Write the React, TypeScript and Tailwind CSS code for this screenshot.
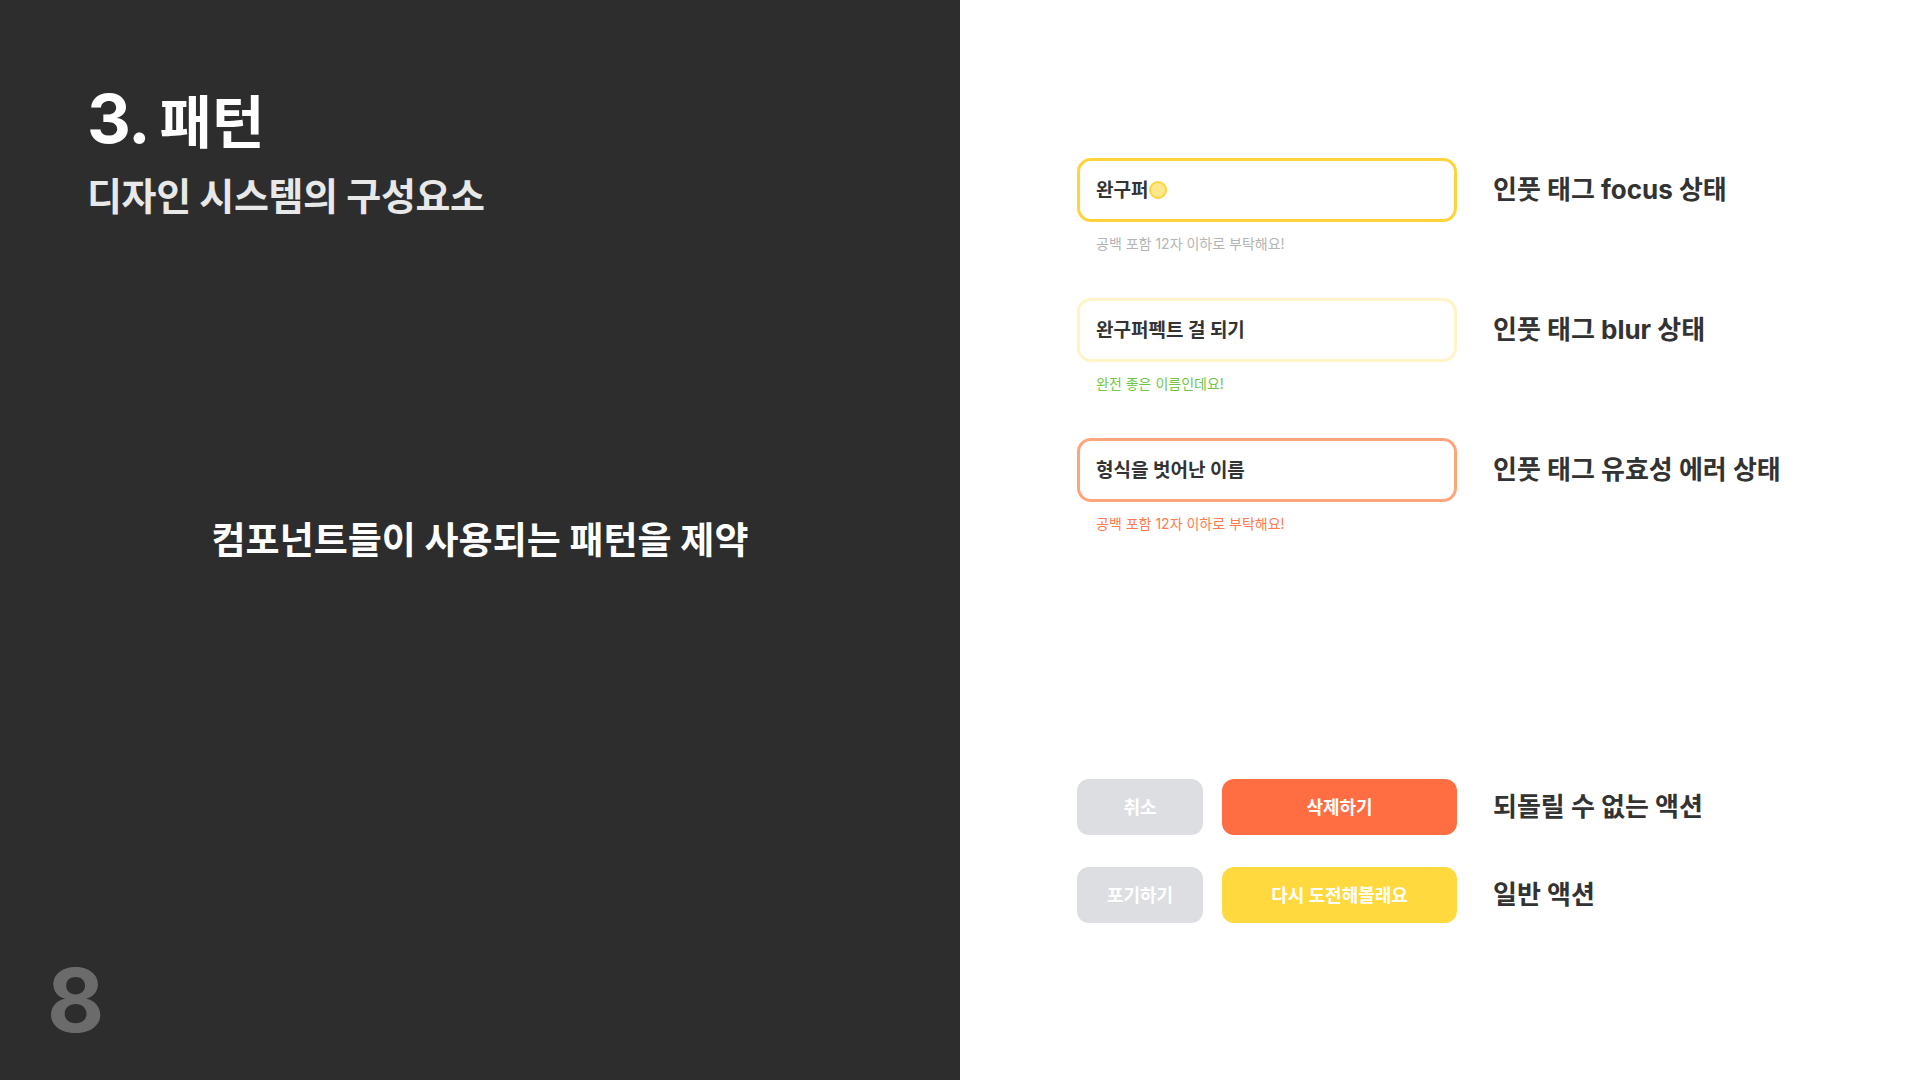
import React from 'react';

const FONT = { fontFamily: 'Inter, "Noto Sans CJK KR", sans-serif' };

type Field = {
  value: string;
  caret?: boolean;
  border: string;
  hint: string;
  hintColor: string;
  label: string;
};

const fields: Field[] = [
  { value: '완구퍼', caret: true, border: 'border-[#ffd43b]', hint: '공백 포함 12자 이하로 부탁해요!', hintColor: 'text-[#b4b4b4]', label: '인풋 태그 focus 상태' },
  { value: '완구퍼펙트 걸 되기', border: 'border-[#fff3c8]', hint: '완전 좋은 이름인데요!', hintColor: 'text-[#72c64a]', label: '인풋 태그 blur 상태' },
  { value: '형식을 벗어난 이름', border: 'border-[#ffa57c]', hint: '공백 포함 12자 이하로 부탁해요!', hintColor: 'text-[#ff7b4f]', label: '인풋 태그 유효성 에러 상태' },
];

function InputRow({ f }: { f: Field }) {
  return (
    <div className="flex items-start gap-[36px] h-[140px]">
      <div className="w-[380px]">
        <div className={`h-[64px] rounded-[14px] border-[3px] ${f.border} bg-white flex items-center px-[16px]`}>
          <span className="text-[19px] font-bold text-[#333333] leading-none">{f.value}</span>
          {f.caret && (
            <span className="ml-[1px] w-[18px] h-[18px] rounded-full bg-[#ffe88c] border-[2px] border-[#ffd43b]" />
          )}
        </div>
        <p className={`mt-[12px] pl-[19px] text-[14px] leading-[20px] ${f.hintColor}`}>{f.hint}</p>
      </div>
      <div className="h-[64px] flex items-center">
        <span className="text-[26px] font-bold text-[#333333] leading-none">{f.label}</span>
      </div>
    </div>
  );
}

function ButtonRow({ left, right, rightBg, label }: { left: string; right: string; rightBg: string; label: string }) {
  return (
    <div className="flex items-center">
      <div className="flex gap-[19px] w-[380px]">
        <button className="w-[126px] h-[56px] rounded-[12px] bg-[#dcdee1] text-white text-[18px] font-bold">{left}</button>
        <button className={`w-[235px] h-[56px] rounded-[12px] ${rightBg} text-white text-[18px] font-bold`}>{right}</button>
      </div>
      <span className="ml-[36px] text-[26px] font-bold text-[#333333] leading-none">{label}</span>
    </div>
  );
}

export default function App() {
  return (
    <div className="w-[1920px] h-[1080px] flex bg-white overflow-hidden" style={FONT}>
      <div className="w-[960px] h-full bg-[#2d2d2d] flex flex-col">
        <div className="h-[260px] pl-[87px] pt-[84px]">
          <h1 className="text-white font-bold leading-none text-[57px] flex items-baseline">
            <span className="text-[68px] mr-[10px] tracking-[-0.02em]">3.</span>
            <span>패턴</span>
          </h1>
          <h2 className="mt-[25px] text-[#e8e8e8] font-bold text-[38px] leading-none tracking-[-0.01em]">디자인 시스템의 구성요소</h2>
        </div>
        <div className="flex-1 flex items-center justify-center">
          <p className="text-white font-bold text-[37px] leading-none">컴포넌트들이 사용되는 패턴을 제약</p>
        </div>
        <div className="h-[260px] flex items-end pl-[47px] pb-[36px]">
          <span className="text-[#6b6b6b] font-bold text-[88px] leading-none">8</span>
        </div>
      </div>

      <div className="flex-1 pl-[117px] pt-[158px] flex flex-col">
        {fields.map((f) => (
          <InputRow key={f.label} f={f} />
        ))}
        <div className="mt-[201px] flex flex-col gap-[32px]">
          <ButtonRow left="취소" right="삭제하기" rightBg="bg-[#ff6d42]" label="되돌릴 수 없는 액션" />
          <ButtonRow left="포기하기" right="다시 도전해볼래요" rightBg="bg-[#ffd93d]" label="일반 액션" />
        </div>
      </div>
    </div>
  );
}
